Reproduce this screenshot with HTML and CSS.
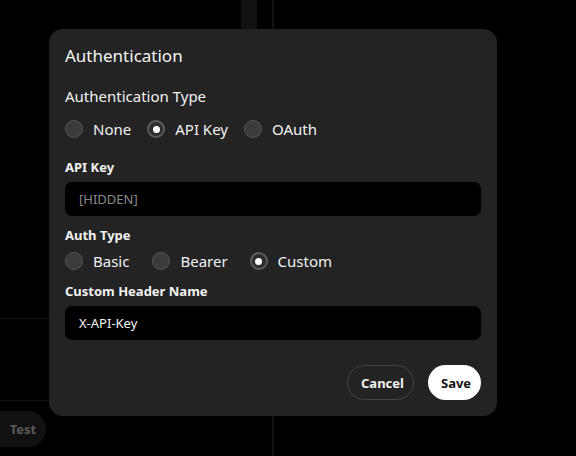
FILE: index.html
```html
<!DOCTYPE html>
<html lang="en">
<head>
    <meta charset="UTF-8">
    <meta name="viewport" content="width=device-width, initial-scale=1.0">
    <title>Authentication</title>
    <link rel="stylesheet" href="styles.css">
</head>
<body>
    <div class="page">
        <div class="side">
            <div class="scroll"></div>
            <div class="side-body">
                <div class="row-line"></div>
                <div class="row-line second"></div>
                <button class="test-btn">Test</button>
            </div>
        </div>
        <div class="main"></div>
    </div>

    <div class="modal">
        <h2 class="modal-title">Authentication</h2>

        <div class="section-title">Authentication Type</div>
        <div class="radios">
            <label class="radio"><span class="dot"></span>None</label>
            <label class="radio checked"><span class="dot"></span>API Key</label>
            <label class="radio"><span class="dot"></span>OAuth</label>
        </div>

        <div class="field-label">API Key</div>
        <div class="input placeholder">[HIDDEN]</div>

        <div class="field-label">Auth Type</div>
        <div class="radios tight">
            <label class="radio"><span class="dot"></span>Basic</label>
            <label class="radio"><span class="dot"></span>Bearer</label>
            <label class="radio checked"><span class="dot"></span>Custom</label>
        </div>

        <div class="field-label">Custom Header Name</div>
        <div class="input">X-API-Key</div>

        <div class="actions">
            <button class="btn cancel">Cancel</button>
            <button class="btn save">Save</button>
        </div>
    </div>
</body>
</html>
```

FILE: styles.css
```css
* {
    margin: 0;
    padding: 0;
    box-sizing: border-box;
    font-family: "Noto Sans", "Open Sans", sans-serif;
}

body {
    background: #000;
    width: 576px;
    height: 456px;
    overflow: hidden;
    color: #f2f2f2;
}

.page {
    display: flex;
    height: 456px;
}

.side {
    width: 274px;
    border-right: 2px solid #111;
    position: relative;
    display: flex;
    flex-direction: column;
}

.scroll {
    position: absolute;
    left: 241px;
    top: 0;
    width: 16px;
    height: 300px;
    background: #111;
}

.side-body {
    margin-top: 318px;
}

.row-line {
    height: 1px;
    background: #141414;
}

.row-line.second {
    margin-top: 81px;
}

.test-btn {
    margin-top: 10px;
    width: 46px;
    height: 36px;
    border: none;
    border-radius: 0 18px 18px 0;
    background: #111;
    color: #5a5a5a;
    font-weight: 700;
    font-size: 13px;
}

.modal {
    position: absolute;
    left: 49px;
    top: 29px;
    width: 448px;
    height: 387px;
    background: #232323;
    border-radius: 14px;
    padding: 14px 16px 0 16px;
}

.modal-title {
    font-size: 17px;
    font-weight: 400;
    line-height: 26px;
    color: #f4f4f4;
}

.section-title {
    margin-top: 16px;
    font-size: 15px;
    line-height: 22px;
}

.radios {
    display: flex;
    gap: 16px;
    margin-top: 11px;
    height: 22px;
    align-items: center;
}

.radios.tight {
    margin-top: 6px;
}

.radio {
    display: flex;
    align-items: center;
    gap: 10px;
    font-size: 15px;
}

.radios.tight .radio:nth-child(2) {
    margin-left: 7px;
}

.radios.tight .radio:nth-child(3) {
    margin-left: 6px;
}

.dot {
    width: 18px;
    height: 18px;
    border-radius: 50%;
    background: #3b3b3b;
    border: 1px solid #555;
    display: flex;
    align-items: center;
    justify-content: center;
}

.checked .dot {
    background: #2e2e2e;
    border: 2px solid #5c5c5c;
}

.checked .dot::after {
    content: "";
    width: 7px;
    height: 7px;
    border-radius: 50%;
    background: #fff;
}

.field-label {
    margin-top: 18px;
    font-size: 13px;
    font-weight: 700;
    line-height: 18px;
}

.input {
    margin-top: 6px;
    height: 34px;
    background: #000;
    border-radius: 7px;
    padding: 0 14px;
    display: flex;
    align-items: center;
    font-size: 13px;
    color: #f4f4f4;
}

.input.placeholder {
    color: #8a8a8a;
}

.input + .field-label {
    margin-top: 10px;
}

.radios.tight + .field-label {
    margin-top: 10px;
}

.actions {
    display: flex;
    justify-content: flex-end;
    gap: 14px;
    margin-top: 25px;
}

.btn {
    height: 35px;
    border-radius: 18px;
    font-size: 13px;
    font-weight: 700;
    padding: 0 13px;
}

.cancel {
    background: transparent;
    border: 1px solid #444;
    color: #f2f2f2;
    width: 67px;
}

.save {
    background: #fff;
    border: none;
    color: #111;
    width: 53px;
}
```
